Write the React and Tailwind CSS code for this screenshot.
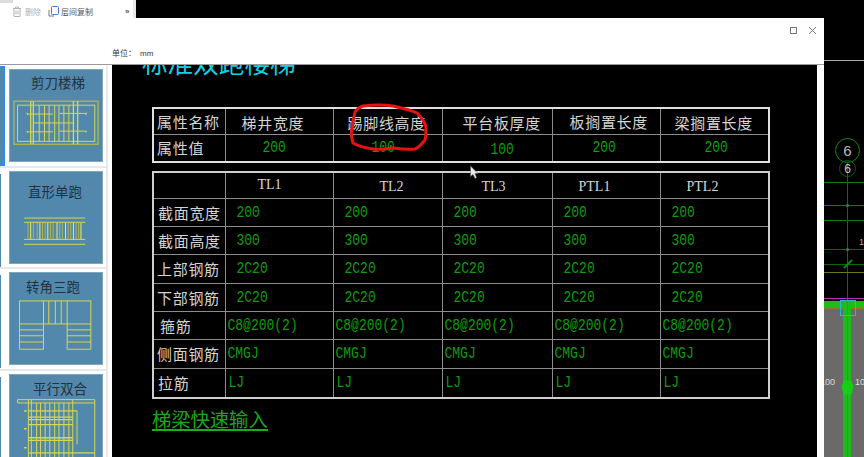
import React from "react";

const cjk = "font-['Noto_Sans_CJK_SC','Noto_Sans',sans-serif]";
const mono = "font-['Liberation_Mono','Noto_Sans_CJK_SC',monospace]";
const serif = "font-['Liberation_Serif',serif]";

const Y = "#d8d84e";

function L({ d, w = 3 }) {
  return <path d={d} fill="none" stroke={Y} strokeWidth={w} />;
}

function ScissorStair() {
  return (
    <svg viewBox="29 300 280 190" className="w-full h-[63px] block">
      <rect x="41" y="309" width="256" height="131" fill="none" stroke="#b5b54a" strokeWidth="4" />
      <rect x="52" y="321" width="235" height="110" fill="none" stroke={Y} strokeWidth="3" />
      <L d="M92 308V440M100 308V440M222 308V440M235 308V440" w={4} />
      <L d="M118 321V431M134 321V431M148 321V431M165 321V431M178 321V431M193 321V431M208 321V431" />
      <L d="M80 348H160M180 346H262M102 375H225M80 402H160M180 400H262" />
      <path d="M80 342l5 8h-5zM262 342l-5 8h5zM80 398l5 6h-5zM262 398l-5 6h5z" fill={Y} />
    </svg>
  );
}

function StraightStair() {
  const xs = [84, 92, 100, 112, 120, 128, 136, 144, 152, 160, 172, 180, 188, 198, 206, 214, 222, 230, 238, 245];
  return (
    <svg viewBox="29 125 280 190" className="w-full h-[63px] block">
      <L d="M72 179H258M72 192H258M72 244H258M72 259H258" />
      {xs.map((x, i) => (
        <path key={i} d={`M${x} 194V244`} stroke={i % 3 === 1 ? "#eeee60" : "#b5b54a"} strokeWidth="3" />
      ))}
    </svg>
  );
}

function CornerStair() {
  return (
    <svg viewBox="29 420 280 199" className="w-full h-[66px] block">
      <rect x="58" y="428" width="217" height="70" fill="none" stroke={Y} strokeWidth="3" />
      <L d="M131 428V575M203 428V575M147 428V498M167 428V498M185 428V498" />
      <L d="M58 498V575H131M275 498V575H203M58 516H131M58 534H131M58 553H131M203 516H275M203 534H275M203 553H275" />
    </svg>
  );
}

function ParallelStair() {
  return (
    <svg viewBox="29 723 280 202" className="w-full h-[67px] block">
      <L d="M52 724H287V734H52ZM287 734V900M233 758V860" />
      <L d="M85 724V900M94 724V900M110 734V900M122 734V900M136 734V900M150 734V900M165 734V900M178 734V900M193 734V900M208 734V900M220 724V900" />
      <L d="M85 758H233M85 777H220M85 785H220M85 800H220M85 840H220M85 848H220M85 886H287" w={4} />
      <path d="M72 756h8v5h-8zM72 810h8v5h-8zM72 868h8v5h-8z" fill={Y} />
    </svg>
  );
}

const cards = [
  { title: "剪刀楼梯", text: "pt-[3px] pl-[21px]", h: "h-[28px]", Draw: ScissorStair },
  { title: "直形单跑", text: "pt-[10px] pl-[18px]", h: "h-[28px]", Draw: StraightStair },
  { title: "转角三跑", text: "pt-[4px] pl-[16px]", h: "h-[25px]", Draw: CornerStair },
  { title: "平行双合", text: "pt-[4px] pl-[23px]", h: "h-[24px]", Draw: ParallelStair },
];

const t1Head = [
  ["属性名称", "pl-[3px]"],
  ["梯井宽度", "pl-[16px] pt-[3px]"],
  ["踢脚线高度", "pl-[14px] pt-[3px]"],
  ["平台板厚度", "pl-[20px] pt-[2px]"],
  ["板搁置长度", "pl-[17px]"],
  ["梁搁置长度", "pl-[14px] pt-[2px]"],
];
const t1Vals = [
  ["200", "pl-[37px]"],
  ["100", "pl-[38px]"],
  ["100", "pl-[48px] pt-[3px]"],
  ["200", "pl-[40px]"],
  ["200", "pl-[44px]"],
];

const t2Cols = [
  ["TL1", "pl-[32px]"],
  ["TL2", "pl-[46px] pt-[3px]"],
  ["TL3", "pl-[39px] pt-[3px]"],
  ["PTL1", "pl-[26px] pt-[3px]"],
  ["PTL2", "pl-[26px] pt-[3px]"],
];
const t2Rows = [
  ["截面宽度", "200", "pl-[4px]", "pl-[11px]", "h-[28px]"],
  ["截面高度", "300", "pl-[4px]", "pl-[11px]", "h-[28px]"],
  ["上部钢筋", "2C20", "pl-[3px]", "pl-[11px]", "h-[29px]"],
  ["下部钢筋", "2C20", "pl-[3px]", "pl-[11px]", "h-[28px]"],
  ["箍筋", "C8@200(2)", "pl-[6px]", "pl-[2px]", "h-[28px]"],
  ["侧面钢筋", "CMGJ", "pl-[3px]", "pl-[2px]", "h-[29px]"],
  ["拉筋", "LJ", "pl-[4px]", "pl-[3px]", "h-[30px]"],
];

const label = `${cjk} text-[15px] tracking-[0.7px] leading-none text-[#d4d4d4] font-normal text-left`;
const val = `${mono} text-[13px] leading-none text-[#0c9c0c] text-left`;
const inner = "border border-[#8c8c8c] p-0 align-middle";

function Val({ children }) {
  return <span className="inline-block scale-y-[1.22]">{children}</span>;
}

export default function App() {
  return (
    <div className="relative w-[864px] h-[457px] overflow-hidden bg-black flex">
      <div className="w-[824px] flex flex-col">
        <div className="h-[18px] flex bg-black">
          <div className="relative w-[136px] bg-white border-r-[3px] border-[#e9e9e9] flex items-center text-[8px] pl-[12px] pt-[5px]">
            <div className="absolute left-0 top-0 w-[13px] h-[3px] bg-[#dcdcdc]" />
            <svg width="10" height="11" viewBox="0 0 10 11" fill="none" stroke="#b5b5b5">
              <path d="M1 2.5H9M3.5 2.5V1H6.5V2.5M2 2.5V10.5H8V2.5M4 4.5V8.5M6 4.5V8.5" />
            </svg>
            <span className={`${cjk} ml-[3px] text-[#b4b4b4] w-[23px]`}>删除</span>
            <svg width="11" height="11" viewBox="0 0 11 11" fill="none">
              <path d="M1 4V10H6" stroke="#777" />
              <rect x="3.5" y="0.5" width="7" height="8" rx="1" stroke="#3d7fd0" />
            </svg>
            <span className={`${cjk} ml-[2px] text-[#555] whitespace-nowrap`}>层间复制</span>
            <span className="ml-[32px] w-[8px] text-[8px] font-bold text-[#555] font-['Liberation_Sans',sans-serif]">»</span>
          </div>
        </div>
        <div className="flex-1 min-h-0 flex flex-col bg-white">
          <div className="h-[47px] relative border-b border-[#9a9a9a]">
            <span className={`${cjk} absolute left-[112px] top-[30px] text-[8px] leading-[10px] text-[#333] whitespace-pre`}>
              单位： <span className="font-['Liberation_Sans',sans-serif]"> mm</span>
            </span>
            <div className="absolute right-[27px] top-[9px] w-[7px] h-[7px] border border-[#777]" />
            <svg className="absolute right-[7px] top-[8px]" width="9" height="9" viewBox="0 0 9 9" stroke="#777" fill="none">
              <path d="M1 1L8 8M8 1L1 8" />
            </svg>
          </div>
          <div className="flex-1 min-h-0 flex">
            <div className="w-[112px] shrink-0 overflow-hidden pt-[1px] bg-white">
              <div className="flex flex-col">
                {cards.map((c, i) => {
                  const Draw = c.Draw;
                  return (
                    <div
                      key={c.title}
                      className="w-[108px] h-[101.5px] shrink-0 border-r-[2px] border-b-[2px] border-[#e6e8ec] flex items-center pl-[9px] relative"
                    >
                      {i === 0 && <div className="absolute left-0 top-[0px] h-[100px] w-[5px] bg-[#5288ab] border-[2px] border-l-0 border-[#2f8cf0]" />}
                      {i > 0 && <div className="absolute left-0 top-[6px] h-[93px] w-[1px] bg-[#5288ab]" />}
                      <div className="w-[94px] h-[93px] bg-[#5288ab] shrink-0 flex flex-col overflow-hidden border border-[#7fa6bf]">
                        <div className={`${c.h} ${c.text} ${cjk} text-[13.5px] leading-[18px] text-[#22323e] whitespace-nowrap shrink-0`}>{c.title}</div>
                        <Draw />
                      </div>
                    </div>
                  );
                })}
              </div>
            </div>
            <div className="w-[705px] bg-black overflow-hidden pl-[40px]">
              <div className={`${cjk} text-[#10d0e4] text-[25.6px] leading-[30px] -mt-[18px] -ml-[10px]`}>标准双跑楼梯</div>
              <table className="table-fixed border-collapse w-[616px] mt-[30px] border-2 border-[#e0e0e0]">
                <colgroup>
                  <col className="w-[72px]" /><col className="w-[108px]" /><col className="w-[109px]" />
                  <col className="w-[110px]" /><col className="w-[108px]" /><col className="w-[109px]" />
                </colgroup>
                <tbody>
                  <tr className="h-[26px]">
                    {t1Head.map(([t, c]) => (
                      <th key={t} className={`${inner} ${label} ${c} whitespace-nowrap`}>{t}</th>
                    ))}
                  </tr>
                  <tr className="h-[28px]">
                    <th className={`${inner} ${label} pl-[3px]`}>属性值</th>
                    {t1Vals.map(([t, c], i) => (
                      <td key={i} className={`${inner} ${val} ${c}`}><Val>{t}</Val></td>
                    ))}
                  </tr>
                </tbody>
              </table>
              <table className="table-fixed border-collapse w-[616px] mt-[8px] border-2 border-[#cfcfcf]">
                <colgroup>
                  <col className="w-[72px]" /><col className="w-[108px]" /><col className="w-[109px]" />
                  <col className="w-[110px]" /><col className="w-[108px]" /><col className="w-[109px]" />
                </colgroup>
                <tbody>
                  <tr className="h-[26px]">
                    <th className={inner} />
                    {t2Cols.map(([t, c]) => (
                      <th key={t} className={`${inner} ${serif} ${c} text-[14px] leading-none font-normal text-left text-[#d8d8d8]`}>{t}</th>
                    ))}
                  </tr>
                  {t2Rows.map(([name, v, lc, vc, h]) => (
                    <tr key={name} className={h}>
                      <th className={`${inner} ${label} ${lc} whitespace-nowrap`}>{name}</th>
                      {[0, 1, 2, 3, 4].map((i) => (
                        <td key={i} className={`${inner} ${val} ${vc} whitespace-nowrap`}><Val>{v}</Val></td>
                      ))}
                    </tr>
                  ))}
                </tbody>
              </table>
              <div className={`${cjk} inline-block mt-[11px] text-[19.3px] leading-[19px] text-[#17a817] border-b-2 border-[#16b016]`}>梯梁快速输入</div>
            </div>
            <div className="flex-1 bg-white" />
          </div>
        </div>
      </div>

      <svg width="40" height="457" viewBox="0 0 40 457" className="shrink-0 block">
        <path d="M0 60.5H40" stroke="#a8a8a8" />
        <path d="M0 182.5H40M0 205.5H40M0 220.5H40" stroke="#0b800b" />
        <path d="M0 249.5H40M0 264.5H40" stroke="#0a6a0a" />
        <path d="M23.5 163V300" stroke="#0a6e0a" />
        <circle cx="23.5" cy="150.5" r="12" fill="none" stroke="#0d8a0d" />
        <circle cx="23.5" cy="168.5" r="8" fill="none" stroke="#0a5a0a" />
        <text x="23.5" y="156" textAnchor="middle" fontSize="15" fill="#b8b8b8" fontFamily="Liberation Sans">6</text>
        <text x="23.5" y="173" textAnchor="middle" fontSize="12" fill="#c8c8c8" fontFamily="Liberation Sans">6</text>
        <text x="35" y="245" fontSize="9" fill="#aaa" fontFamily="Liberation Sans">15</text>
        <path d="M20 268L28 260" stroke="#0e8a0e" strokeWidth="2" />
        <circle cx="23.5" cy="205.5" r="1.5" fill="#14a014" />
        <circle cx="23.5" cy="249.5" r="1.5" fill="#14a014" />
        <path d="M0 272.5H40" stroke="#74741e" />
        <path d="M0 298.5H40" stroke="#b82fb8" />
        <rect x="0" y="309" width="40" height="148" fill="#6a6a6a" />
        <rect x="0" y="301" width="40" height="8" fill="#1cbc1c" />
        <path d="M0 308.5H40" stroke="#a07020" />
        <rect x="19" y="301" width="8" height="156" fill="#1cbc1c" />
        <path d="M23.5 301V457" stroke="#b0601e" />
        <rect x="16.5" y="300.5" width="15" height="15" fill="none" stroke="#28b8c8" />
        <path d="M20 381H27L29 387L27 394H20L18 387Z" fill="#12d012" stroke="#12d012" strokeWidth="1" />
        <text x="-4" y="385" fontSize="9" fill="#ddd" fontFamily="Liberation Sans">100</text>
        <text x="31" y="385" fontSize="9" fill="#ddd" fontFamily="Liberation Sans">100</text>
      </svg>

      <svg className="absolute left-0 top-0 pointer-events-none" width="864" height="457" viewBox="0 0 864 457">
        <path
          d="M363 106C372 105 386 105 393 106C402 108 411 110 417 113C422 118 425 122 426 127C426 132 426 137 425 140C421 145 418 148 415 149C408 150 400 149 393 148C386 149 380 150 373 149C366 148 358 146 353 143C351 137 351 132 352 127C353 121 354 116 355 112C357 109 360 107 363 106Z"
          fill="none"
          stroke="#e81212"
          strokeWidth="3"
        />
        <path d="M470.5 166V176.5L473 174.5L475 178.5L476.5 177.5L475 173.5H478Z" fill="#e8e8e8" stroke="#555" strokeWidth="0.5" />
      </svg>
    </div>
  );
}
